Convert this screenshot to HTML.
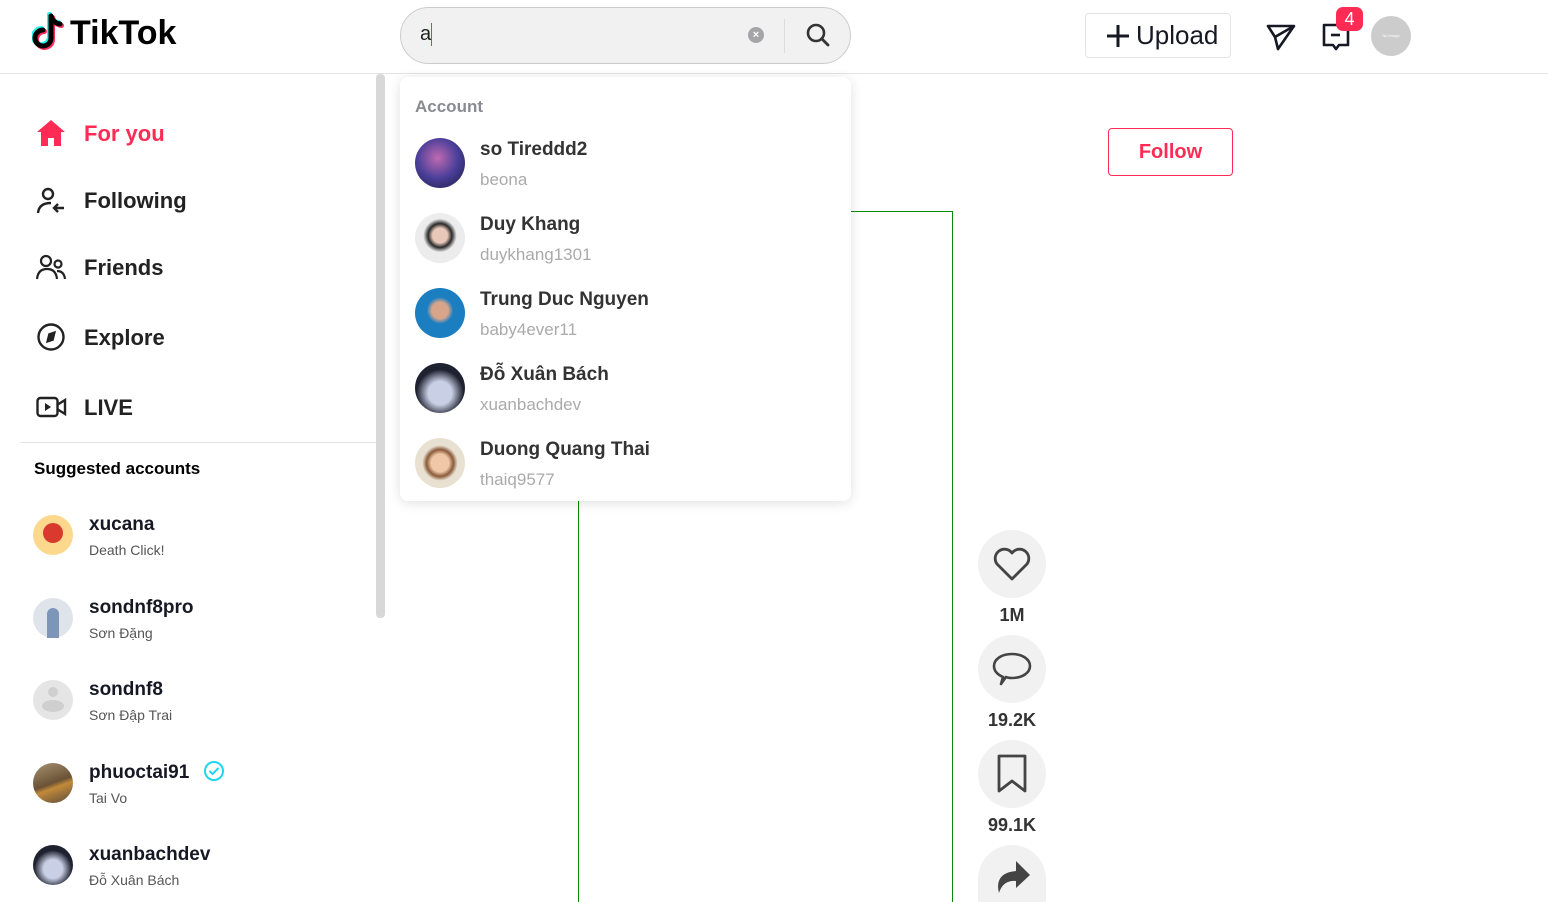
<!DOCTYPE html>
<html style="width:1548px;height:902px;overflow:hidden"><head><meta charset="utf-8"><style>
*{margin:0;padding:0;box-sizing:border-box}
body{width:1548px;height:902px;overflow:hidden;background:#fff;font-family:"Liberation Sans",sans-serif;position:relative;color:#161823}
.a{position:absolute}
.hdr{left:0;top:0;width:1548px;height:74px;border-bottom:1px solid #e3e3e4;background:#fff}
.nav{left:36px;font-size:22px;font-weight:bold;color:#222}
.nav span{position:absolute;left:48px;top:0;white-space:nowrap}
.sa .av{position:absolute;left:0;top:0;width:40px;height:40px;border-radius:50%}
.sa b{position:absolute;left:56px;top:-1px;font-size:19px;white-space:nowrap}
.sa i{position:absolute;left:56px;top:27px;font-size:14px;font-style:normal;color:#555;white-space:nowrap}
.dd .av{position:absolute;left:0;top:0;width:50px;height:50px;border-radius:50%}
.dd b{position:absolute;left:65px;top:1px;font-size:19px;color:#333;white-space:nowrap}
.dd i{position:absolute;left:65px;top:32px;font-size:17px;font-style:normal;color:#aaa;white-space:nowrap}
.act{left:978px;width:68px;height:68px;border-radius:50%;background:#f1f1f2}
.cnt{width:68px;left:978px;text-align:center;font-weight:bold;font-size:18px;color:#333}
</style></head><body>
<div class="a hdr"></div>
<svg class="a" style="left:32px;top:12px" width="36" height="38" viewBox="0 0 36 38">
<g fill="none" stroke-width="5" stroke-linecap="round">
<path d="M19 4v22a8 8 0 1 1-8-8" stroke="#25f4ee" transform="translate(-1.5,-1.5)"/>
<path d="M19 4q2 7 9 8" stroke="#25f4ee" transform="translate(-1.5,-1.5)"/>
<path d="M19 4v22a8 8 0 1 1-8-8" stroke="#fe2c55" transform="translate(1.5,1.5)"/>
<path d="M19 4q2 7 9 8" stroke="#fe2c55" transform="translate(1.5,1.5)"/>
<path d="M19 4v22a8 8 0 1 1-8-8" stroke="#000"/>
<path d="M19 4q2 7 9 8" stroke="#000"/>
</g></svg>
<div class="a" style="left:70px;top:14px;font-size:34px;font-weight:bold;letter-spacing:0px;color:#000">TikTok</div>
<div class="a" style="left:400px;top:7px;width:451px;height:57px;border-radius:29px;background:#f1f1f2;border:1px solid #ccc"></div>
<div class="a" style="left:420px;top:23px;font-size:20px;color:#222">a</div>
<div class="a" style="left:431px;top:23px;width:1px;height:23px;background:#fe2c55"></div>
<div class="a" style="left:748px;top:27px;width:16px;height:16px;border-radius:50%;background:#a5a5a8;color:#fff;font-size:11px;text-align:center;line-height:16px;font-weight:bold">×</div>
<div class="a" style="left:784px;top:19px;width:1px;height:34px;background:#ddd"></div>
<svg class="a" style="left:805px;top:22px" width="26" height="26" viewBox="0 0 26 26"><circle cx="11" cy="11" r="8" fill="none" stroke="#333" stroke-width="2.6"/><path d="M17 17l6 6" stroke="#333" stroke-width="2.8" stroke-linecap="round"/></svg>
<div class="a" style="left:1085px;top:13px;width:146px;height:45px;border:1px solid #e3e3e4;border-radius:4px"></div>
<svg class="a" style="left:1105px;top:23px" width="26" height="26"><path d="M13 2v22M2 13h22" stroke="#161823" stroke-width="3"/></svg>
<div class="a" style="left:1136px;top:20px;font-size:26px;color:#161823">Upload</div>
<svg class="a" style="left:1265px;top:22px" width="32" height="30" viewBox="0 0 32 30"><path d="M3 4h26L13 27l-3-12zM10 15L29 4" fill="none" stroke="#161823" stroke-width="2.6" stroke-linejoin="round"/></svg>
<svg class="a" style="left:1321px;top:22px" width="30" height="30" viewBox="0 0 30 30"><path d="M3 3h24v20h-9l-3 4-3-4H3z" fill="none" stroke="#161823" stroke-width="2.6" stroke-linejoin="round"/><path d="M10 13h9" stroke="#161823" stroke-width="2.6"/></svg>
<div class="a" style="left:1336px;top:7px;width:27px;height:24px;border-radius:7px;background:#fe2c55;color:#fff;font-size:18px;text-align:center;line-height:24px">4</div>
<div class="a" style="left:1371px;top:16px;width:40px;height:40px;border-radius:50%;background:#ccc;color:#fff;font-size:4px;text-align:center;line-height:40px">No Image</div>
<div class="a" style="left:376px;top:74px;width:9px;height:544px;background:#d8d8d8;border-radius:4px"></div>
<svg class="a" style="left:36px;top:119px" width="30" height="28" viewBox="0 0 30 28"><path d="M15 1L1 13h4v14h7v-8h6v8h7V13h4z" fill="#fe2c55"/></svg>
<div class="a nav" style="top:121px;color:#fe2c55"><span>For you</span></div>
<svg class="a" style="left:36px;top:186px" width="30" height="30" viewBox="0 0 30 30" fill="none" stroke="#222" stroke-width="2.4"><circle cx="12" cy="8" r="5"/><path d="M2 27q1-10 13-10M28 22H18m4-4l-4 4 4 4"/></svg>
<div class="a nav" style="top:188px"><span>Following</span></div>
<svg class="a" style="left:36px;top:254px" width="30" height="26" viewBox="0 0 30 26" fill="none" stroke="#222" stroke-width="2.2"><circle cx="10" cy="7" r="5"/><circle cx="22" cy="10" r="3.5"/><path d="M1 25q1-10 10-10t10 10M21 17q7 0 8 8"/></svg>
<div class="a nav" style="top:255px"><span>Friends</span></div>
<svg class="a" style="left:36px;top:322px" width="30" height="30" viewBox="0 0 30 30" fill="none" stroke="#222" stroke-width="2.4"><circle cx="15" cy="15" r="12.5"/><path d="M19 10l-6 2-2 8 6-2z" fill="#222" stroke-width="1.5"/></svg>
<div class="a nav" style="top:325px"><span>Explore</span></div>
<svg class="a" style="left:36px;top:396px" width="31" height="22" viewBox="0 0 31 22" fill="none" stroke="#222" stroke-width="2.4"><rect x="1.5" y="2" width="20" height="18" rx="3"/><path d="M21 9l8-5v14l-8-5"/><path d="M9 7l6 4-6 4z" fill="#222" stroke="none"/></svg>
<div class="a nav" style="top:395px"><span>LIVE</span></div>
<div class="a" style="left:21px;top:442px;width:355px;height:1px;background:#e3e3e4"></div>
<div class="a" style="left:34px;top:459px;font-size:17px;font-weight:bold;color:#000">Suggested accounts</div>
<div class="a sa" style="left:33px;top:515px"><div class="av" style="background:#fbd88b"><div style="position:absolute;left:10px;top:8px;width:20px;height:20px;border-radius:50%;background:#d83a2e"></div></div><b>xucana</b><i>Death Click!</i></div>
<div class="a sa" style="left:33px;top:598px"><div class="av" style="background:#dfe4ea"><div style="position:absolute;left:14px;top:10px;width:12px;height:30px;border-radius:6px 6px 0 0;background:#7d96b8"></div></div><b>sondnf8pro</b><i>Sơn Đặng</i></div>
<div class="a sa" style="left:33px;top:680px"><div class="av" style="background:#e5e5e5"><div style="position:absolute;left:15px;top:7px;width:10px;height:10px;border-radius:50%;background:#cfcfcf"></div><div style="position:absolute;left:9px;top:20px;width:22px;height:12px;border-radius:50%;background:#cfcfcf"></div></div><b>sondnf8</b><i>Sơn Đập Trai</i></div>
<div class="a sa" style="left:33px;top:763px"><div class="av" style="background:linear-gradient(160deg,#a89373,#6b5236 50%,#c28a3a 60%,#5a4a3a)"></div><b>phuoctai91</b><i>Tai Vo</i></div>
<svg class="a" style="left:203px;top:760px" width="22" height="22" viewBox="0 0 22 22" fill="none" stroke="#20d5ec" stroke-width="2"><circle cx="11" cy="11" r="9"/><path d="M6.5 11l3 3 6-6"/></svg>
<div class="a sa" style="left:33px;top:845px"><div class="av" style="background:radial-gradient(circle at 50% 60%,#c9cfe4 30%,#1e2130 60%)"></div><b>xuanbachdev</b><i>Đỗ Xuân Bách</i></div>
<div class="a" style="left:578px;top:211px;width:375px;height:691px;border:1px solid #0a8a0a;border-bottom:none"></div>
<div class="a" style="left:1108px;top:128px;width:125px;height:48px;border:1px solid #fe2c55;border-radius:4px;color:#fe2c55;font-weight:bold;font-size:20px;text-align:center;line-height:46px">Follow</div>
<div class="a act" style="top:530px"></div>
<svg class="a" style="left:992px;top:546px" width="40" height="36" viewBox="0 0 40 36"><path d="M20 33L5 18A8.5 8.5 0 0 1 20 7a8.5 8.5 0 0 1 15 11z" fill="none" stroke="#444" stroke-width="2.8" stroke-linejoin="round"/></svg>
<div class="a cnt" style="top:605px">1M</div>
<div class="a act" style="top:635px"></div>
<svg class="a" style="left:992px;top:651px" width="40" height="36" viewBox="0 0 40 36"><path d="M9 33l2-7Q2 22 2 15C2 8 10 3 20 3s18 5 18 12-8 12-18 12q-4 0-6-1z" fill="none" stroke="#444" stroke-width="2.6" stroke-linejoin="round"/></svg>
<div class="a cnt" style="top:710px">19.2K</div>
<div class="a act" style="top:740px"></div>
<svg class="a" style="left:996px;top:754px" width="32" height="40" viewBox="0 0 32 40"><path d="M3 2h26v35l-13-10L3 37z" fill="none" stroke="#444" stroke-width="2.8" stroke-linejoin="round"/></svg>
<div class="a cnt" style="top:815px">99.1K</div>
<div class="a act" style="top:845px;height:57px;border-radius:34px 34px 0 0"></div>
<svg class="a" style="left:992px;top:859px" width="40" height="36" viewBox="0 0 40 36"><path d="M24 2l14 14-14 13v-7q-13-1-17 12-5-20 17-22z" fill="#444"/></svg>
<div class="a" style="left:400px;top:77px;width:451px;height:424px;background:#fff;border-radius:8px;box-shadow:0 2px 12px rgba(0,0,0,0.12)"></div>
<div class="a" style="left:415px;top:97px;font-size:17px;font-weight:bold;color:#8a8b91">Account</div>
<div class="a dd" style="left:415px;top:138px"><div class="av" style="background:radial-gradient(circle at 45% 40%,#c06ab0,#4a3f9a 50%,#1c1a3a)"></div><b>so Tireddd2</b><i>beona</i></div>
<div class="a dd" style="left:415px;top:213px"><div class="av" style="background:radial-gradient(circle at 50% 45%,#e8c8b8 20%,#2a2a2a 32%,#ececec 45%)"></div><b>Duy Khang</b><i>duykhang1301</i></div>
<div class="a dd" style="left:415px;top:288px"><div class="av" style="background:radial-gradient(circle at 50% 45%,#d9a58a 22%,#1a7ec0 36%)"></div><b>Trung Duc Nguyen</b><i>baby4ever11</i></div>
<div class="a dd" style="left:415px;top:363px"><div class="av" style="background:radial-gradient(circle at 50% 60%,#c9cfe4 30%,#1e2130 60%)"></div><b>Đỗ Xuân Bách</b><i>xuanbachdev</i></div>
<div class="a dd" style="left:415px;top:438px"><div class="av" style="background:radial-gradient(circle at 50% 50%,#f0c8a8 25%,#8a5a3a 38%,#e8e0d0 50%)"></div><b>Duong Quang Thai</b><i>thaiq9577</i></div>
</body></html>
